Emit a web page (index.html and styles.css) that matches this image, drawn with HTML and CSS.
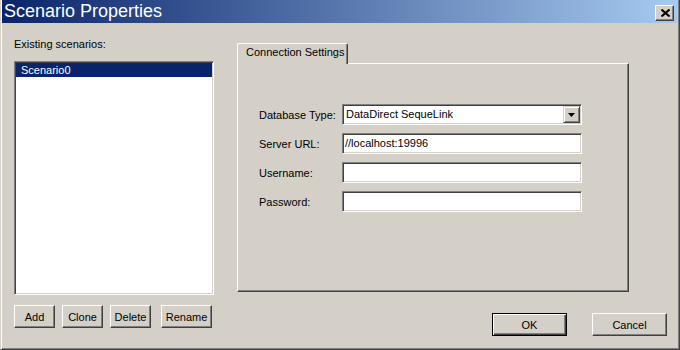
FILE: index.html
```html
<!DOCTYPE html>
<html>
<head>
<meta charset="utf-8">
<link rel="stylesheet" href="styles.css">
</head>
<body>
<div class="window">
  <div class="titlebar">
    <span class="title">Scenario Properties</span>
    <div class="close"><svg width="9" height="8" viewBox="0 0 9 8"><path d="M0.5 0.5 L8.5 7.5 M8.5 0.5 L0.5 7.5" stroke="#000" stroke-width="2" fill="none"/></svg></div>
  </div>
  <div class="main">
    <div class="left">
      <div class="label">Existing scenarios:</div>
      <div class="listbox"><div class="item selected">Scenario0</div></div>
      <div class="btnrow">
        <button class="btn w41">Add</button>
        <button class="btn w41">Clone</button>
        <button class="btn w41">Delete</button>
        <button class="btn w51 rename">Rename</button>
      </div>
    </div>
    <div class="right">
      <div class="tabs"><div class="tab">Connection Settings</div></div>
      <div class="panel">
        <div class="form">
          <div class="row"><span class="flabel">Database Type:</span>
            <div class="combo"><span class="ctext">DataDirect SequeLink</span><span class="dropbtn"><svg width="7" height="4" viewBox="0 0 7 4"><path d="M0 0 H7 L3.5 4 Z" fill="#000"/></svg></span></div>
          </div>
          <div class="row"><span class="flabel">Server URL:</span><div class="field">//localhost:19996</div></div>
          <div class="row"><span class="flabel">Username:</span><div class="field"></div></div>
          <div class="row"><span class="flabel">Password:</span><div class="field"></div></div>
        </div>
      </div>
      <div class="dlgbuttons">
        <button class="btn dlg default">OK</button>
        <button class="btn dlg">Cancel</button>
      </div>
    </div>
  </div>
</div>
</body>
</html>
```

FILE: styles.css
```css
html, body {
  margin: 0;
  padding: 0;
  background: #D4D0C8;
}
body {
  font-family: "Liberation Sans", Arial, sans-serif;
  font-size: 11px;
  color: #000;
}
.window {
  width: 680px;
  height: 350px;
  box-sizing: border-box;
  background: #D4D0C8;
  border-left: 1px solid #D4D0C8;
  border-right: 1px solid #404040;
  border-bottom: 1px solid #404040;
  box-shadow: inset 1px 0 #fff, inset -1px -1px #808080;
  display: flex;
  flex-direction: column;
}
.titlebar {
  height: 23px;
  margin: 0 1px;
  background: linear-gradient(to right, #0A246A, #A6CAF0);
  display: flex;
  justify-content: space-between;
  align-items: flex-start;
  color: #fff;
}
.title {
  font-size: 18px;
  line-height: 23px;
  padding-left: 2px;
}
.close {
  margin: 5px 4px 0 0;
  width: 19px;
  height: 16px;
  box-sizing: border-box;
  background: #D4D0C8;
  border: 1px solid;
  border-color: #fff #404040 #404040 #fff;
  box-shadow: inset -1px -1px #808080;
  display: flex;
  align-items: center;
  justify-content: center;
}
.close svg { display: block; margin-left: 1px; }
.main {
  display: flex;
  padding: 15px 0 0 13px;
}
.left {
  width: 200px;
  display: flex;
  flex-direction: column;
}
.label {
  line-height: 13px;
  height: 13px;
}
.listbox {
  margin-top: 10px;
  height: 234px;
  box-sizing: border-box;
  background: #fff;
  border: 1px solid;
  border-color: #808080 #fff #fff #808080;
  box-shadow: inset 1px 1px #404040, inset -1px -1px #D4D0C8;
  padding: 1px;
}
.item {
  height: 14px;
  line-height: 14px;
  padding-left: 5px;
}
.item.selected {
  background: #0A246A;
  color: #fff;
}
.btnrow {
  margin-top: 10px;
  display: flex;
  gap: 7px;
}
.btn {
  height: 23px;
  box-sizing: border-box;
  background: #D4D0C8;
  border: 1px solid;
  border-color: #fff #404040 #404040 #fff;
  box-shadow: inset -1px -1px #808080;
  font-family: "Liberation Sans", Arial, sans-serif;
  font-size: 11px;
  color: #000;
  padding: 0;
  margin: 0;
}
.w41 { width: 41px; }
.w51 { width: 51px; }
.rename { margin-left: 3px; }
.right {
  margin-left: 23px;
  width: 430px;
  display: flex;
  flex-direction: column;
}
.tabs {
  margin-top: 5px;
  display: flex;
  position: relative;
  z-index: 1;
  margin-bottom: -1px;
}
.tab {
  width: 111px;
  height: 21px;
  box-sizing: border-box;
  background: #D4D0C8;
  border-top: 1px solid #fff;
  border-left: 1px solid #fff;
  border-right: 1px solid #404040;
  box-shadow: inset -1px 0 #808080;
  border-radius: 2px 2px 0 0;
  padding: 2px 0 0 8px;
  line-height: 13px;
}
.panel {
  width: 392px;
  height: 229px;
  box-sizing: border-box;
  border: 1px solid;
  border-color: #fff #404040 #404040 #fff;
  box-shadow: inset -1px -1px #808080;
  padding: 40px 0 0 21px;
}
.form {
  display: flex;
  flex-direction: column;
  gap: 8px;
}
.row {
  display: flex;
  align-items: center;
  height: 21px;
}
.flabel {
  width: 83px;
}
.field, .combo {
  width: 240px;
  height: 21px;
  box-sizing: border-box;
  background: #fff;
  border: 1px solid;
  border-color: #808080 #fff #fff #808080;
  box-shadow: inset 1px 1px #404040, inset -1px -1px #D4D0C8;
  line-height: 19px;
  padding-left: 2px;
  white-space: nowrap;
}
.combo {
  display: flex;
  justify-content: space-between;
  align-items: center;
  padding: 1px;
  line-height: 17px;
}
.ctext { padding-left: 2px; }
.dropbtn {
  width: 17px;
  height: 17px;
  box-sizing: border-box;
  background: #D4D0C8;
  border: 1px solid;
  border-color: #D4D0C8 #404040 #404040 #D4D0C8;
  box-shadow: inset 1px 1px #fff, inset -1px -1px #808080;
  display: flex;
  align-items: center;
  justify-content: center;
}
.dropbtn svg { display: block; }
.dlgbuttons {
  margin-top: 21px;
  display: flex;
  justify-content: flex-end;
  gap: 25px;
}
.dlg { width: 75px; }
.btn.default {
  border: 1px solid #000;
  box-shadow: inset 1px 1px #fff, inset -1px -1px #404040, inset -2px -2px #808080;
}
```
